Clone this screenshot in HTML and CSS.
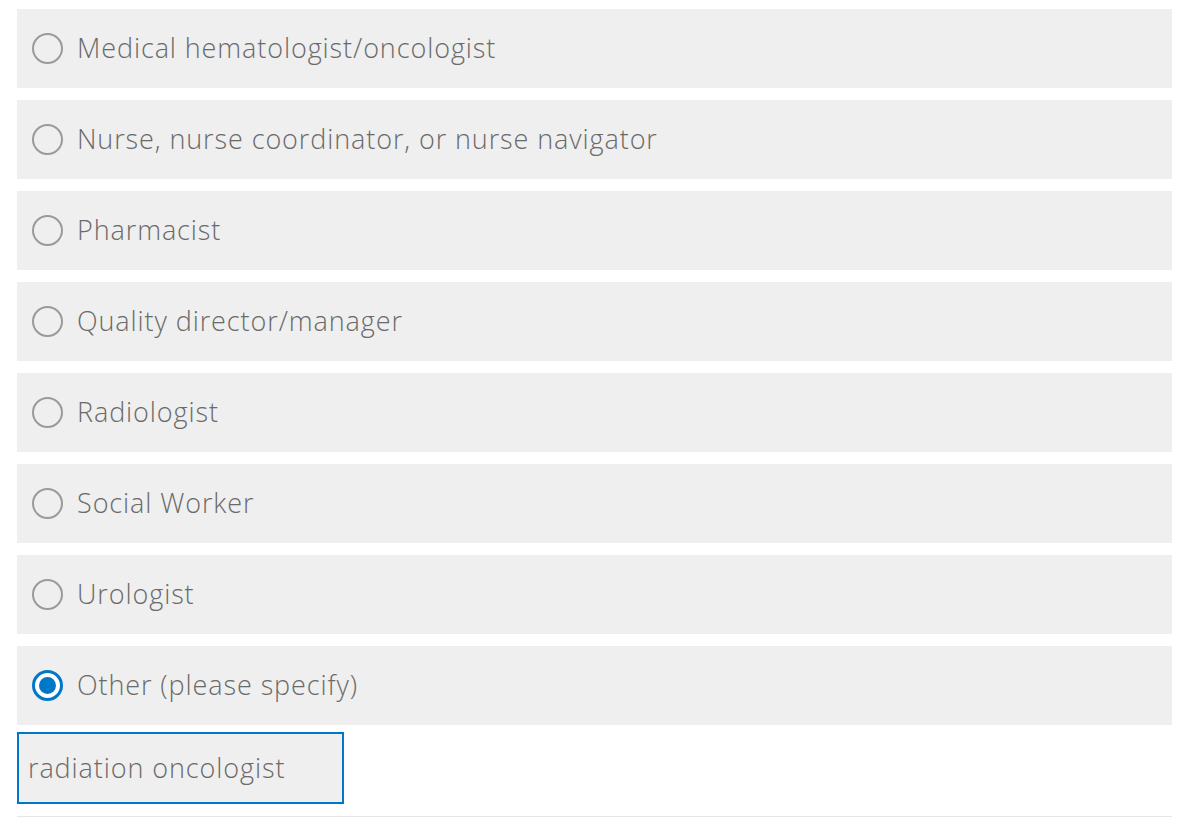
FILE: index.html
```html
<!DOCTYPE html>
<html>
<head>
<meta charset="utf-8">
<link rel="stylesheet" href="styles.css">
</head>
<body>
<div class="page">
  <div class="options">
    <label class="option"><span class="radio"></span><span class="label">Medical hematologist/oncologist</span></label>
    <label class="option"><span class="radio"></span><span class="label">Nurse, nurse coordinator, or nurse navigator</span></label>
    <label class="option"><span class="radio"></span><span class="label">Pharmacist</span></label>
    <label class="option"><span class="radio"></span><span class="label">Quality director/manager</span></label>
    <label class="option"><span class="radio"></span><span class="label">Radiologist</span></label>
    <label class="option"><span class="radio"></span><span class="label">Social Worker</span></label>
    <label class="option"><span class="radio"></span><span class="label">Urologist</span></label>
    <label class="option"><span class="radio checked"></span><span class="label">Other (please specify)</span></label>
  </div>
  <div class="other-input">radiation oncologist</div>
  <div class="divider"></div>
</div>
</body>
</html>
```
FILE: styles.css
```css
html, body {
  margin: 0;
  padding: 0;
  background: #ffffff;
}
.page {
  padding: 9px 23px 0 17px;
  font-family: "Open Sans", "Liberation Sans", sans-serif;
  font-weight: 300;
  color: #6a6a6a;
}
.options {
  display: flex;
  flex-direction: column;
  gap: 12px;
}
.option {
  display: flex;
  align-items: center;
  height: 79px;
  background: #efefef;
  padding-left: 15px;
  box-sizing: border-box;
}
.radio {
  width: 31px;
  height: 31px;
  box-sizing: border-box;
  border: 2.5px solid #9a9a9a;
  border-radius: 50%;
  flex: none;
  position: relative;
}
.radio.checked {
  border: 3px solid #0077c8;
  background: #ffffff;
}
.radio.checked::after {
  content: "";
  position: absolute;
  left: 4px;
  top: 4px;
  width: 17px;
  height: 17px;
  border-radius: 50%;
  background: #0077c8;
}
.label {
  margin-left: 14px;
  font-size: 27px;
  line-height: 1;
  letter-spacing: 0.9px;
  padding-bottom: 2px;
}
.other-input {
  margin-top: 7px;
  width: 327px;
  height: 72px;
  box-sizing: border-box;
  border: 2px solid #0077c8;
  background: #efefef;
  display: flex;
  align-items: center;
  padding-left: 9px;
  padding-bottom: 2px;
  font-size: 27px;
  letter-spacing: 0.9px;
}
.divider {
  margin-top: 12px;
  height: 1px;
  background: #e6e6e6;
}
```
